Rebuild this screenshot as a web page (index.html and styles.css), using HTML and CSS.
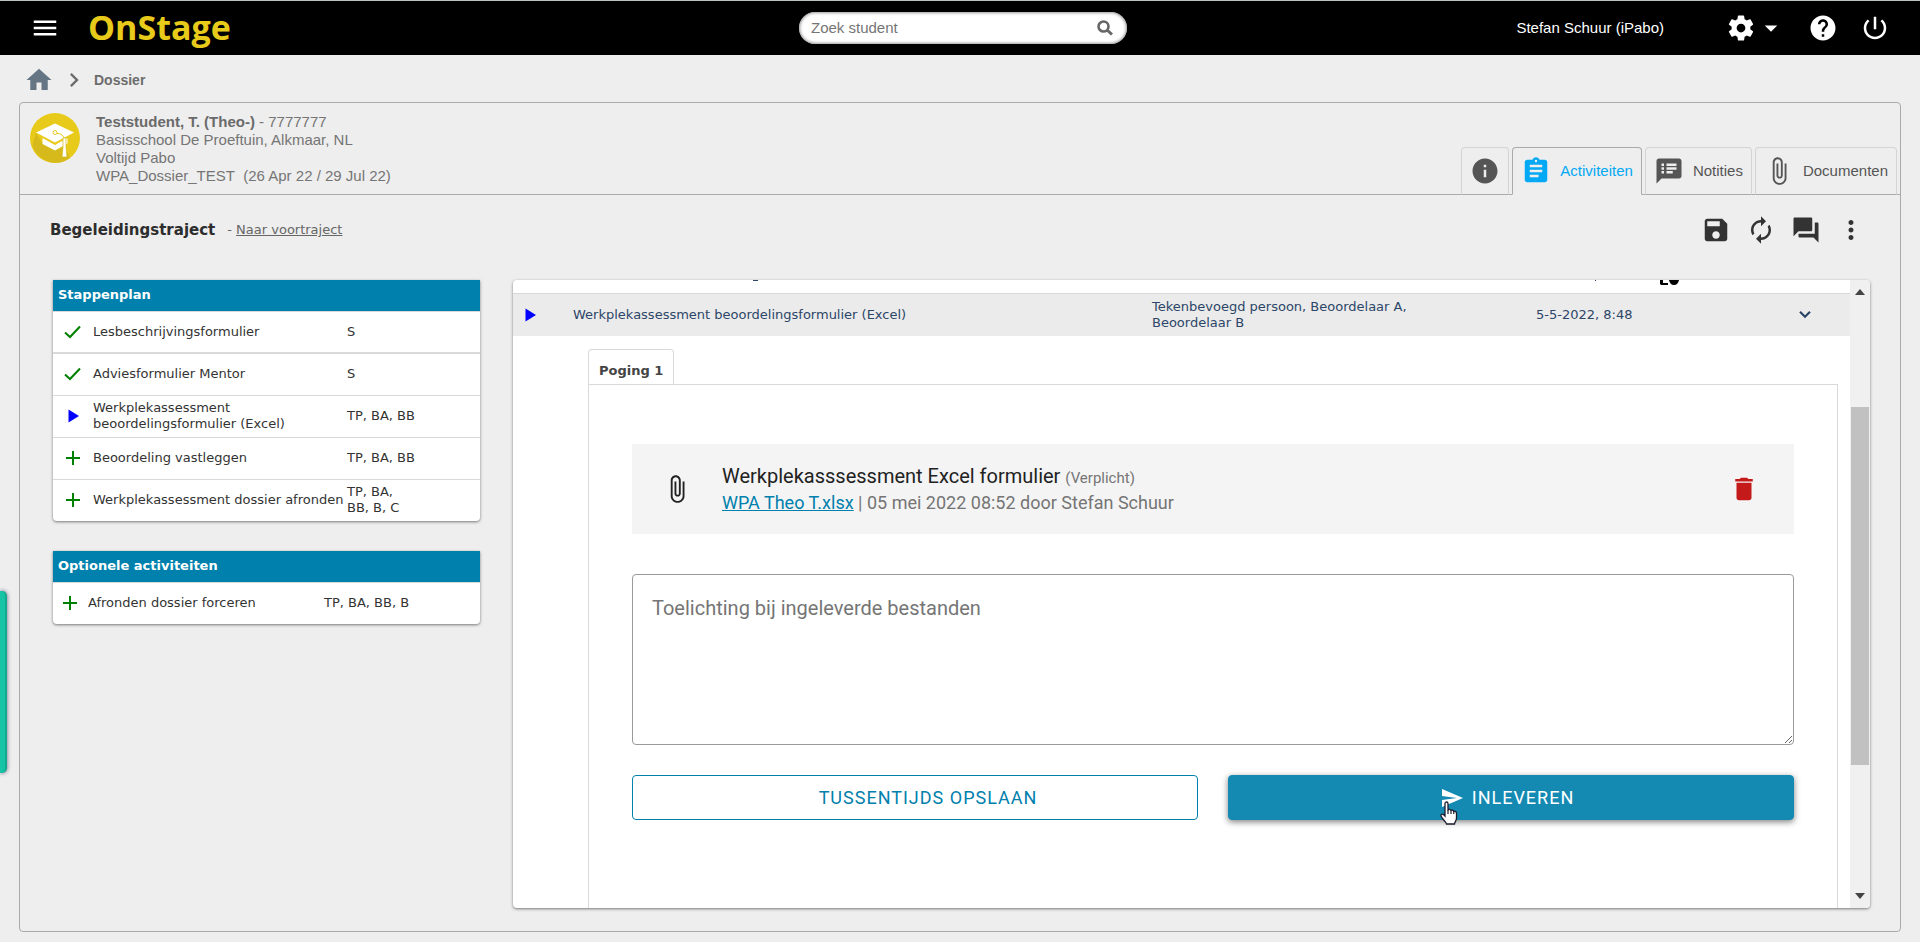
FILE: index.html
```html
<!DOCTYPE html>
<html lang="nl">
<head>
<meta charset="utf-8">
<title>OnStage - Dossier</title>
<link rel="stylesheet" href="styles.css">
</head>
<body>
<svg class="sprite" aria-hidden="true">
  <symbol id="attach" viewBox="0 0 24 24"><path d="M16.5 6v11.5c0 2.21-1.79 4-4 4s-4-1.79-4-4V5c0-1.38 1.12-2.5 2.5-2.5s2.5 1.12 2.5 2.5v10.5c0 .55-.45 1-1 1s-1-.45-1-1V6H10v9.5c0 1.38 1.12 2.5 2.5 2.5s2.5-1.12 2.5-2.5V5c0-2.210-1.790-4-4-4S7 2.790 7 5v12.500c0 3.040 2.460 5.500 5.500 5.500s5.500-2.460 5.500-5.500V6h-1.500z"/></symbol>
  <symbol id="check" viewBox="0 0 18 18"><path d="M1 9.500 6 14 16 3.500" fill="none" stroke="currentColor" stroke-width="2"/></symbol>
  <symbol id="plus" viewBox="0 0 18 18"><path d="M8 2h2v6h6v2h-6v6H8v-6H2V8h6z"/></symbol>
  <symbol id="play" viewBox="0 0 18 18"><path d="M4.500 2.500 15 9 4.500 15.500z"/></symbol>
</svg>

<header class="topbar">
  <button class="icon-btn" aria-label="Menu"><svg class="icon" viewBox="0 0 24 24"><path d="M3 18h18v-2H3v2zm0-5h18v-2H3v2zm0-7v2h18V6H3z"/></svg></button>
  <a class="logo" href="#">OnStage</a>
  <form class="search">
    <input class="search-input" type="text" placeholder="Zoek student" aria-label="Zoek student">
    <button class="icon-btn search-btn" type="button" aria-label="Zoeken"><svg class="icon-16" viewBox="0 0 16 16"><circle cx="6.500" cy="6.500" r="5" fill="none" stroke="currentColor" stroke-width="2.600"/><path d="m10 10 5 4.500" stroke="currentColor" stroke-width="3"/></svg></button>
  </form>
  <div class="account">
    <span class="user">Stefan Schuur (iPabo)</span>
    <button class="icon-btn settings" aria-label="Instellingen">
      <svg class="icon" viewBox="0 0 24 24"><path d="M19.430 12.980c.04-.32.07-.64.07-.98s-.03-.66-.07-.98l2.110-1.650c.19-.15.24-.42.12-.64l-2-3.460c-.12-.22-.39-.3-.61-.22l-2.490 1c-.52-.4-1.080-.73-1.690-.98l-.38-2.650C14.460 2.180 14.250 2 14 2h-4c-.25 0-.46.18-.49.42l-.38 2.650c-.61.25-1.170.59-1.690.98l-2.490-1c-.23-.09-.49 0-.61.22l-2 3.460c-.13.22-.07.49.12.64l2.110 1.650c-.04.32-.07.65-.07.98s.03.66.07.98l-2.110 1.650c-.19.15-.24.42-.12.64l2 3.460c.12.22.39.3.61.22l2.490-1c.52.4 1.080.73 1.690.98l.38 2.650c.03.24.24.42.49.42h4c.25 0 .46-.18.49-.42l.38-2.650c.61-.25 1.170-.59 1.690-.98l2.490 1c.23.09.49 0 .61-.22l2-3.460c.12-.22.07-.49-.12-.64l-2.110-1.650zM12 15.500c-1.930 0-3.500-1.570-3.500-3.500s1.570-3.500 3.500-3.500 3.500 1.570 3.500 3.500-1.570 3.500-3.500 3.500z"/></svg>
      <svg class="icon" viewBox="0 0 24 24"><path d="m7 10 5 5 5-5z"/></svg>
    </button>
    <button class="icon-btn" aria-label="Help"><svg class="icon" viewBox="0 0 24 24"><path d="M12 2C6.480 2 2 6.480 2 12s4.480 10 10 10 10-4.480 10-10S17.520 2 12 2zm1 17h-2v-2h2v2zm2.070-7.750-.9.920C13.450 12.900 13 13.500 13 15h-2v-.5c0-1.100.45-2.100 1.170-2.830l1.240-1.260c.37-.36.59-.86.59-1.410 0-1.100-.9-2-2-2s-2 .9-2 2H8c0-2.210 1.790-4 4-4s4 1.790 4 4c0 .88-.36 1.680-.93 2.250z"/></svg></button>
    <button class="icon-btn" aria-label="Afmelden"><svg class="icon" viewBox="0 0 24 24"><path d="M13 3h-2v10h2V3zm4.830 2.170-1.420 1.420C17.990 7.860 19 9.810 19 12c0 3.870-3.130 7-7 7s-7-3.130-7-7c0-2.190 1.010-4.140 2.580-5.420L6.170 5.170C4.230 6.820 3 9.260 3 12c0 4.970 4.030 9 9 9s9-4.030 9-9c0-2.740-1.230-5.180-3.170-6.830z"/></svg></button>
  </div>
</header>

<nav class="crumbs" aria-label="Kruimelpad">
  <a class="crumb-home" href="#" aria-label="Home"><svg class="icon" viewBox="0 0 24 24"><path d="M10 20v-6h4v6h5v-8h3L12 3 2 12h3v8z"/></svg></a>
  <svg class="icon-28" viewBox="0 0 24 24"><path d="M10 6 8.590 7.410 13.170 12l-4.580 4.590L10 18l6-6z"/></svg>
  <span class="crumb-current">Dossier</span>
</nav>

<main class="panel">
  <div class="student">
    <svg class="avatar" viewBox="0 0 50 50">
      <circle cx="25" cy="25" r="25" fill="#e8ca1a"/>
      <path d="M6 20 2.500 32A24 24 0 0 0 40 45L35 35 12 30z" fill="#d6b91a"/>
      <path d="M25 10.500 44 19.500 25 29.500 6 19.500z" fill="#fff"/>
      <path d="M12.500 25 25 32l12.500-7v5.500L25 37.500 12.500 31z" fill="#fff"/>
      <circle cx="25" cy="19.500" r="2" fill="none" stroke="#e8ca1a"/>
      <path d="M27 20.500q6 0 7 5" fill="none" stroke="#e8ca1a"/>
      <path d="M33 25h3v9l1 10h-5l1-10z" fill="#fff" stroke="#d6b91a" stroke-width=".7"/>
    </svg>
    <div class="student-info">
      <div><b>Teststudent, T. (Theo-)</b> - 7777777</div>
      <div>Basisschool De Proeftuin, Alkmaar, NL</div>
      <div>Voltijd Pabo</div>
      <div>WPA_Dossier_TEST&nbsp; (26 Apr 22 / 29 Jul 22)</div>
    </div>
    <nav class="tabs">
      <a class="tab" href="#" aria-label="Informatie"><svg class="icon" viewBox="0 0 24 24"><path d="M12 2C6.480 2 2 6.480 2 12s4.480 10 10 10 10-4.480 10-10S17.520 2 12 2zm1 15h-2v-6h2v6zm0-8h-2V7h2v2z"/></svg></a>
      <a class="tab tab-active" href="#"><svg class="icon" viewBox="0 0 24 24"><path d="M19 3h-4.180C14.400 1.840 13.300 1 12 1c-1.300 0-2.400.84-2.820 2H5c-1.100 0-2 .9-2 2v14c0 1.100.9 2 2 2h14c1.100 0 2-.9 2-2V5c0-1.100-.9-2-2-2zm-7 0c.55 0 1 .45 1 1s-.45 1-1 1-1-.45-1-1 .45-1 1-1zm2 14H7v-2h7v2zm3-4H7v-2h10v2zm0-4H7V7h10v2z"/></svg><span>Activiteiten</span></a>
      <a class="tab" href="#"><svg class="icon" viewBox="0 0 24 24"><path d="M20 2H4c-1.100 0-1.990.9-1.990 2L2 22l4-4h14c1.100 0 2-.9 2-2V4c0-1.100-.9-2-2-2zM8 14H6v-2h2v2zm0-3H6V9h2v2zm0-3H6V6h2v2zm7 6h-5v-2h5v2zm3-3h-8V9h8v2zm0-3h-8V6h8v2z"/></svg><span>Notities</span></a>
      <a class="tab" href="#"><svg class="icon"><use href="#attach"/></svg><span>Documenten</span></a>
    </nav>
  </div>

  <div class="toolbar">
    <h1 class="title">Begeleidingstraject</h1>
    <span class="switch">- <a class="switch-link" href="#">Naar voortraject</a></span>
    <div class="tools">
      <button class="icon-btn" aria-label="Opslaan"><svg class="icon" viewBox="0 0 24 24"><path d="M17 3H5c-1.110 0-2 .9-2 2v14c0 1.100.89 2 2 2h14c1.100 0 2-.9 2-2V7l-4-4zm-5 16c-1.660 0-3-1.340-3-3s1.340-3 3-3 3 1.340 3 3-1.340 3-3 3zm3-10H5V5h10v4z"/></svg></button>
      <button class="icon-btn" aria-label="Vernieuwen"><svg class="icon" viewBox="0 0 24 24"><path d="M12 6v3l4-4-4-4v3c-4.420 0-8 3.580-8 8 0 1.570.46 3.030 1.240 4.260L6.700 14.800c-.45-.83-.7-1.790-.7-2.800 0-3.310 2.690-6 6-6zm6.760 1.740L17.300 9.200c.44.84.7 1.790.7 2.800 0 3.310-2.690 6-6 6v-3l-4 4 4 4v-3c4.420 0 8-3.580 8-8 0-1.570-.46-3.030-1.240-4.260z"/></svg></button>
      <button class="icon-btn" aria-label="Berichten"><svg class="icon" viewBox="0 0 24 24"><path d="M21 6h-2v9H6v2c0 .55.45 1 1 1h11l4 4V7c0-.55-.45-1-1-1zm-4 6V3c0-.55-.45-1-1-1H3c-.55 0-1 .45-1 1v14l4-4h10c.55 0 1-.45 1-1z"/></svg></button>
      <button class="icon-btn" aria-label="Meer"><svg class="icon" viewBox="0 0 24 24"><path d="M12 8c1.100 0 2-.9 2-2s-.9-2-2-2-2 .9-2 2 .9 2 2 2zm0 2c-1.100 0-2 .9-2 2s.9 2 2 2 2-.9 2-2-.9-2-2-2zm0 6c-1.100 0-2 .9-2 2s.9 2 2 2 2-.9 2-2-.9-2-2-2z"/></svg></button>
    </div>
  </div>

  <div class="content">
    <aside class="side">
      <table class="card steps">
        <thead><tr><th colspan="3">Stappenplan</th></tr></thead>
        <tbody>
          <tr class="done"><td class="mark"><svg class="icon-18"><use href="#check"/></svg></td><td class="name">Lesbeschrijvingsformulier</td><td class="who"><div class="who-text">S</div></td></tr>
          <tr><td class="mark"><svg class="icon-18"><use href="#check"/></svg></td><td class="name">Adviesformulier Mentor</td><td class="who"><div class="who-text">S</div></td></tr>
          <tr><td class="mark mark-now"><svg class="icon-18"><use href="#play"/></svg></td><td class="name">Werkplekassessment<br>beoordelingsformulier (Excel)</td><td class="who"><div class="who-text">TP, BA, BB</div></td></tr>
          <tr><td class="mark"><svg class="icon-18"><use href="#plus"/></svg></td><td class="name">Beoordeling vastleggen</td><td class="who"><div class="who-text">TP, BA, BB</div></td></tr>
          <tr><td class="mark"><svg class="icon-18"><use href="#plus"/></svg></td><td class="name">Werkplekassessment dossier afronden</td><td class="who"><div class="who-text">TP, BA, BB, B, C</div></td></tr>
        </tbody>
      </table>
      <table class="card steps optional">
        <thead><tr><th colspan="3">Optionele activiteiten</th></tr></thead>
        <tbody>
          <tr><td class="mark"><svg class="icon-18"><use href="#plus"/></svg></td><td class="name">Afronden dossier forceren</td><td class="who">TP, BA, BB, B</td></tr>
        </tbody>
      </table>
    </aside>

    <section class="card detail">
      <div class="detail-body">
        <div class="activity activity-cut">
          <span></span>
          <svg class="cut-mark" viewBox="0 0 200 5"><path d="M180 0h5v1h-5z"/></svg>
          <span></span>
          <svg class="cut-icon" viewBox="0 0 150 5"><path d="M59 0h1v1h-1z"/><path d="M124 0h3v3h5v2h-7l-1-1zM133 0h10q-1 5-5 5t-5-5z" fill="#000"/></svg>
        </div>
        <div class="activity">
          <svg class="icon-18 now"><use href="#play"/></svg>
          <span>Werkplekassessment beoordelingsformulier (Excel)</span>
          <span class="roles">Tekenbevoegd persoon, Beoordelaar A, Beoordelaar B</span>
          <span class="when">5-5-2022, 8:48
            <button class="icon-btn" aria-label="Inklappen"><svg class="icon-20" viewBox="0 0 24 24"><path d="M6 8 12 14 18 8" fill="none" stroke="currentColor" stroke-width="2.600"/></svg></button>
          </span>
        </div>
        <div class="attempt">
          <div class="attempt-tabs"><button class="attempt-tab">Poging 1</button></div>
          <div class="attempt-body">
            <div class="file">
              <svg class="icon"><use href="#attach"/></svg>
              <div class="file-text">
                <div class="file-title">Werkplekasssessment Excel formulier <span class="required">(Verplicht)</span></div>
                <div class="file-meta"><a class="file-link" href="#">WPA Theo T.xlsx</a> | 05 mei 2022 08:52 door Stefan Schuur</div>
              </div>
              <button class="icon-btn delete" aria-label="Verwijderen"><svg class="icon" viewBox="0 0 24 24"><path d="M6 19c0 1.100.9 2 2 2h8c1.100 0 2-.9 2-2V7H6v12zM19 4h-3.500l-1-1h-5l-1 1H5v2h14V4z"/></svg></button>
            </div>
            <textarea class="note" placeholder="Toelichting bij ingeleverde bestanden" aria-label="Toelichting bij ingeleverde bestanden"></textarea>
            <div class="actions">
              <button class="btn btn-outline">TUSSENTIJDS OPSLAAN</button>
              <button class="btn btn-primary">
                <span class="send"><svg class="icon-24" viewBox="0 0 24 24"><path d="M2.010 21 23 12 2.010 3 2 10l15 2-15 2z"/></svg>
                <svg class="pointer" viewBox="0 0 18 24"><path d="M5 2.500C5 .5 8 .5 8 2.500v7c0-1.500 3-1.500 3 .5 0-1.500 2.800-1 2.800 1 .2-1.300 2.700-1 2.700 1v5c0 3-2 4-2 6H6.500c0-2-5.500-6-5.500-8.500 0-2 2-2 4 .5z" fill="#fff" stroke="#1b1b2b" stroke-width="1.300"/><path d="M8 9v4M11 10v3M13.800 11v2" stroke="#1b1b2b" stroke-width="1.200"/></svg></span>
                INLEVEREN
              </button>
            </div>
          </div>
        </div>
      </div>
      <div class="scroll" aria-hidden="true">
        <svg class="scroll-arrow" viewBox="0 0 10 6"><path d="M0 6 5 0l5 6z"/></svg>
        <div class="scroll-track"><div class="scroll-thumb"></div></div>
        <svg class="scroll-arrow" viewBox="0 0 10 6"><path d="m0 0 5 6 5-6z"/></svg>
      </div>
    </section>
  </div>
</main>
<div class="side-handle"></div>
</body>
</html>
```

FILE: styles.css
```css
* { box-sizing: border-box; }

body {
  margin: 0;
  min-height: 100vh;
  display: flex;
  flex-direction: column;
  background: #eeeeee;
  color: #333;
  font: 13px/16px "DejaVu Sans", sans-serif;
}

.sprite { position: absolute; width: 0; height: 0; }
svg { fill: currentColor; display: block; flex: none; }
.icon { width: 30px; height: 30px; }
.icon-28 { width: 28px; height: 28px; }
.icon-24 { width: 24px; height: 24px; }
.icon-20 { width: 20px; height: 20px; }
.icon-18 { width: 18px; height: 18px; }
.icon-16 { width: 16px; height: 16px; }

.icon-btn {
  display: flex;
  padding: 0;
  border: 0;
  background: none;
  color: inherit;
  cursor: pointer;
}

/* Top bar */
.topbar {
  display: grid;
  grid-template-columns: 58px 1fr 328px 1fr;
  align-items: center;
  height: 55px;
  padding: 0 30px;
  border-top: 1px solid #b8c0c0;
  background: #000;
  color: #fff;
  font: 15px/18px "Liberation Sans", Arial, sans-serif;
}
.logo {
  padding-bottom: 2px;
  color: #e8ca1a;
  font: bold 34px/42px "Open Sans", sans-serif;
  text-decoration: none;
}
.search {
  display: flex;
  align-items: center;
  height: 32px;
  margin: 0 26px 0 -26px;
  padding: 0 14px 0 12px;
  border-radius: 16px;
  background: #fff;
  box-shadow: inset 0 0 3px 1px #999;
  color: #666;
}
.search-input {
  flex: 1;
  padding: 0;
  border: 0;
  outline: 0;
  background: none;
  font: inherit;
}
.search-input::placeholder { color: #757575; }
.account { display: flex; justify-content: flex-end; align-items: center; gap: 22px; }
.user { margin-right: 40px; }

/* Breadcrumbs */
.crumbs {
  display: flex;
  align-items: center;
  height: 47px;
  padding: 2px 24px 0;
  gap: 6px;
  color: #6c6c6c;
  font: bold 14px/18px "Liberation Sans", Arial, sans-serif;
}
.crumb-home { color: #667583; }

/* Panel */
.panel {
  flex: 1;
  display: flex;
  flex-direction: column;
  margin: 0 19px 10px;
  border: 1px solid #aaa;
  border-radius: 4px;
}
.student {
  display: flex;
  align-items: flex-start;
  gap: 16px;
  height: 92px;
  padding: 10px 3px 0 10px;
  border-bottom: 1px solid #aaa;
  color: #757575;
  font: 15px/18px "Liberation Sans", Arial, sans-serif;
}
.avatar { width: 50px; height: 50px; }
.student-info { flex: 1; }
.student-info b { color: #6a6a6a; }
.tabs { display: flex; gap: 3px; align-self: flex-end; margin-bottom: -1px; }
.tab {
  display: flex;
  align-items: center;
  gap: 9px;
  height: 48px;
  padding: 0 8px;
  border: 1px solid #d4d4d4;
  border-bottom-color: #aaa;
  border-radius: 4px 4px 0 0;
  color: #555;
  text-decoration: none;
}
.tab-active {
  border-color: #aaa;
  border-bottom-color: #eee;
  color: #03a9f4;
}

.toolbar {
  display: flex;
  align-items: center;
  gap: 12px;
  height: 70px;
  padding: 0 34px 0 30px;
}
.title { margin: 0; color: #2d2d2d; font-size: 15px; line-height: 18px; }
.switch, .switch-link { color: #666; }
.tools { display: flex; gap: 15px; margin-left: auto; }

.content { flex: 1; display: flex; gap: 33px; padding: 15px 30px 23px 33px; }
.side { flex: none; width: 427px; display: flex; flex-direction: column; gap: 30px; }
.card {
  overflow: hidden;
  border-radius: 4px;
  background: #fff;
  box-shadow: 0 1px 3px rgba(0, 0, 0, .5);
}

/* Step tables */
.steps { width: 100%; border-collapse: collapse; border-radius: 0 0 4px 4px; }
.steps th {
  height: 31px;
  padding: 0 5px;
  background: #0080ac;
  color: #fff;
  text-align: left;
}
.steps td { height: 42px; padding: 0; border-top: 1px solid #d9d9d9; }
.steps .done td { border-bottom: 2px solid #d9d9d9; }
.mark { width: 40px; color: #008000; }
.mark svg { margin-left: 11px; }
.mark-now, .now { color: #0000ff; }
.steps .name { width: 254px; white-space: nowrap; }
.who-text { width: 72px; }
.optional .mark { width: 35px; }
.optional .mark svg { margin-left: 8px; }
.optional .name { width: 236px; }

/* Activity detail */
.detail { flex: 1; display: flex; min-width: 0; }
.detail-body { flex: 1; display: flex; flex-direction: column; min-width: 0; }
.activity {
  display: grid;
  grid-template-columns: 52px 579fr 384fr 314fr;
  align-items: center;
  min-height: 43px;
  padding: 0 0 0 8px;
  border-top: 1px solid #d9d9d9;
  background: #ebebeb;
  color: #2c4668;
}
.activity-cut { align-items: start; min-height: 13px; border-top: 0; background: none; }
.cut-mark { width: 200px; height: 5px; }
.cut-icon { width: 150px; height: 5px; }
.roles { max-width: 260px; }
.when { display: flex; align-items: center; justify-content: space-between; padding-right: 35px; }

.attempt {
  flex: 1;
  display: flex;
  flex-direction: column;
  padding: 13px 12px 0 75px;
}
.attempt-tabs { display: flex; margin-bottom: -1px; }
.attempt-tab {
  height: 36px;
  padding: 6px 10px 0;
  border: 1px solid #d9d9d9;
  border-bottom: 0;
  border-radius: 4px 4px 0 0;
  background: #fff;
  color: #444;
  font: bold 13px/16px "DejaVu Sans", sans-serif;
}
.attempt-body {
  flex: 1;
  display: flex;
  flex-direction: column;
  padding: 59px 43px 40px;
  border: 1px solid #d9d9d9;
  border-bottom: 0;
  font-family: Roboto, sans-serif;
}
.file {
  display: flex;
  align-items: center;
  gap: 30px;
  height: 90px;
  padding: 0 35px 0 30px;
  background: #f4f4f4;
  color: #222;
}
.file-text { flex: 1; padding-top: 2px; }
.file-title { font-size: 20px; line-height: 24px; }
.required { color: #757575; font-size: 15px; }
.file-meta { color: #757575; font-size: 18px; line-height: 26px; }
.file-link { color: #0080ac; }
.delete { color: #c51a1a; }
.note {
  height: 171px;
  margin-top: 40px;
  padding: 20px 19px;
  border: 1px solid #9a9a9a;
  border-radius: 4px;
  resize: vertical;
  font: 20px/26px Roboto, sans-serif;
}
.note::placeholder { color: #757575; }
.actions { display: grid; grid-template-columns: 1fr 1fr; gap: 30px; margin-top: 30px; }
.btn {
  display: flex;
  align-items: center;
  justify-content: center;
  gap: 8px;
  height: 45px;
  padding: 0 8px 0 0;
  border: 1px solid #0080ac;
  border-radius: 4px;
  background: #fff;
  color: #0080ac;
  font: 18px/24px Roboto, sans-serif;
  letter-spacing: 1px;
}
.btn-outline { padding: 0 6px 0 32px; }
.btn-primary {
  border-color: #148ab3;
  background: #148ab3;
  color: #fff;
  box-shadow: 0 2px 6px rgba(0, 0, 0, .5);
}
.send { position: relative; }
.pointer { position: absolute; left: 0; top: 15px; width: 18px; height: 24px; }

/* Scroll bar */
.scroll {
  display: flex;
  flex-direction: column;
  align-items: center;
  width: 20px;
  padding: 9px 1px;
  background: #f0f0f0;
  color: #444;
}
.scroll-arrow { width: 10px; height: 6px; }
.scroll-track { flex: 1; display: flex; flex-direction: column; width: 100%; padding: 112px 0 128px; }
.scroll-thumb { flex: 1; background: #c1c1c1; }

/* Handle that hangs over the left window edge */
.side-handle {
  position: fixed;
  left: 0;
  top: 591px;
  width: 7px;
  height: 182px;
  border-right: 2px solid #13a98f;
  border-radius: 0 5px 5px 0;
  background: #17c3a5;
  box-shadow: 0 0 4px rgba(0, 0, 60, .6);
}
```
